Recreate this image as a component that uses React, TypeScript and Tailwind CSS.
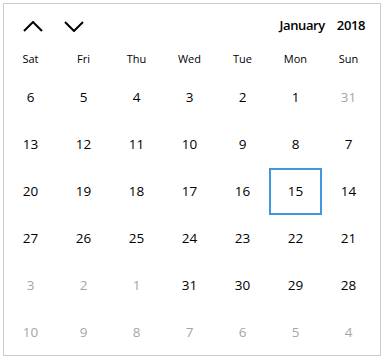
import React from "react";

const dayNames = ["Sat", "Fri", "Thu", "Wed", "Tue", "Mon", "Sun"];

type Cell = { n: number; cur: boolean; sel?: boolean };

const rows: Cell[][] = [
  [6, 5, 4, 3, 2, 1, -31].map((n) => ({ n: Math.abs(n), cur: n > 0 })),
  [13, 12, 11, 10, 9, 8, 7].map((n) => ({ n, cur: true })),
  [20, 19, 18, 17, 16, 15, 14].map((n) => ({ n, cur: true, sel: n === 15 })),
  [27, 26, 25, 24, 23, 22, 21].map((n) => ({ n, cur: true })),
  [-3, -2, -1, 31, 30, 29, 28].map((n) => ({ n: Math.abs(n), cur: n > 0 })),
  [-10, -9, -8, -7, -6, -5, -4].map((n) => ({ n: Math.abs(n), cur: false })),
];

export default function App() {
  return (
    <div className="w-[385px] h-[360px] bg-white pt-[3px] pl-[3px]" style={{ fontFamily: '"Open Sans", "Noto Sans", sans-serif' }}>
      <div className="w-[378px] h-[353px] border border-[#cccccc] overflow-hidden flex flex-col">
        <div className="h-[41px] flex items-center pl-[19px] pr-[15px] shrink-0">
          <svg width="20" height="11" viewBox="0 0 20 11" className="mt-[4px]">
            <polyline points="1,10 10,1 19,10" fill="none" stroke="#000" strokeWidth="2" />
          </svg>
          <svg width="20" height="11" viewBox="0 0 20 11" className="ml-[21px] mt-[4px]">
            <polyline points="1,1 10,10 19,1" fill="none" stroke="#000" strokeWidth="2" />
          </svg>
          <div className="ml-auto text-[13px] font-semibold tracking-[-0.4px] text-black mt-[3px] flex gap-[12px]">
            <span>January</span>
            <span>2018</span>
          </div>
        </div>
        <div className="h-[29px] grid grid-cols-[repeat(7,53px)] shrink-0">
          {dayNames.map((d) => (
            <div key={d} className="flex items-center justify-center text-[11px] text-black">
              {d}
            </div>
          ))}
        </div>
        <div className="flex flex-col">
          {rows.map((r, i) => (
            <div key={i} className="h-[47px] grid grid-cols-[repeat(7,53px)] shrink-0">
              {r.map((c, j) => (
                <div
                  key={j}
                  className={
                    "flex items-center justify-center text-[13.5px] " +
                    (c.cur ? "text-black " : "text-[#a6a6a6] ") +
                    (c.sel ? "border-2 border-[#3f98e1]" : "")
                  }
                >
                  {c.n}
                </div>
              ))}
            </div>
          ))}
        </div>
      </div>
    </div>
  );
}
